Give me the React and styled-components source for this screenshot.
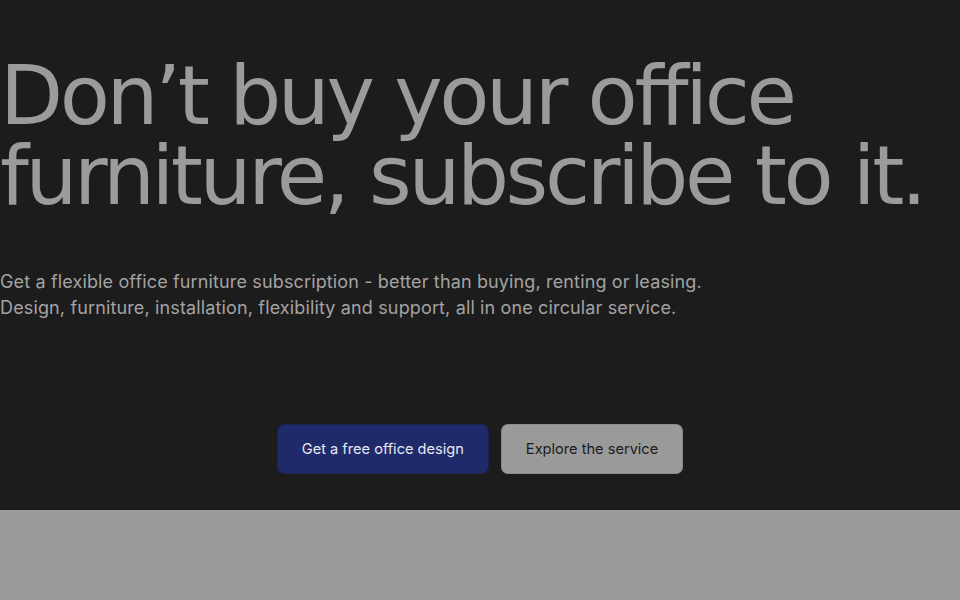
import React from 'react';
import styled, { createGlobalStyle } from 'styled-components';

const GlobalStyle = createGlobalStyle`
  html, body {
    margin: 0;
    padding: 0;
    background: #9a9a9a;
  }
`;

const Hero = styled.section`
  background: #1c1c1c;
  height: 510px;
  display: flex;
  flex-direction: column;
  box-sizing: border-box;
  padding-top: 56px;
`;

const Title = styled.h1`
  margin: 0;
  font-family: "DejaVu Sans", sans-serif;
  font-weight: 400;
  font-size: 82px;
  line-height: 80px;
  color: #9b9b9b;
  letter-spacing: -3.4px;
  white-space: nowrap;
`;

const Lead = styled.p`
  margin: 53px 0 0;
  font-family: Inter, sans-serif;
  font-size: 18px;
  line-height: 26px;
  letter-spacing: 0.14px;
  color: #a3a3a3;
`;

const Actions = styled.div`
  display: flex;
  justify-content: center;
  gap: 14px;
  margin-top: 104px;
`;

const Button = styled.button`
  height: 48px;
  padding: 0 24px;
  border-radius: 6px;
  border: none;
  font-family: Inter, sans-serif;
  font-size: 14.6px;
  background: ${(p) => (p.$primary ? '#1f2a6b' : '#9a9a9a')};
  color: ${(p) => (p.$primary ? '#e6e8f2' : '#1a1a1a')};
  box-shadow: 0 0 0 1px ${(p) => (p.$primary ? '#1b2250' : '#8c8c8c')};
`;

export default function App() {
  return (
    <>
      <GlobalStyle />
      <Hero>
        <Title>
          Don’t buy your office
          <br />
          furniture, subscribe to it.
        </Title>
        <Lead>
          Get a flexible office furniture subscription - better than buying, renting or leasing.
          <br />
          Design, furniture, installation, flexibility and support, all in one circular service.
        </Lead>
        <Actions>
          <Button $primary>Get a free office design</Button>
          <Button>Explore the service</Button>
        </Actions>
      </Hero>
    </>
  );
}
